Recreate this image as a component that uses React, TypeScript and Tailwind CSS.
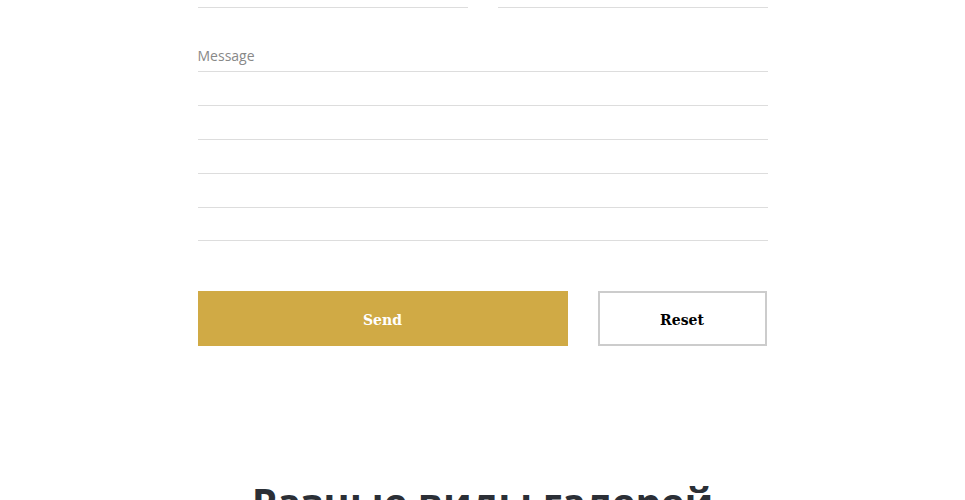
export default function App() {
  return (
    <div className="h-[500px] w-full overflow-hidden bg-white" style={{ fontFamily: '"Open Sans", sans-serif' }}>
      <div className="mx-auto w-[570px]">
        <div className="flex gap-[30px]">
          <div className="h-[8px] flex-1 border-b border-[#dddddd]" />
          <div className="h-[8px] flex-1 border-b border-[#dddddd]" />
        </div>
        <div className="border-b border-[#dddddd] pt-[38px] pb-[5px] text-[14px] leading-[20px] text-[#888888]">Message</div>
        <div className="h-[34px] border-b border-[#dddddd]" />
        <div className="h-[34px] border-b border-[#dddddd]" />
        <div className="h-[34px] border-b border-[#dddddd]" />
        <div className="h-[34px] border-b border-[#dddddd]" />
        <div className="h-[33px] border-b border-[#dddddd]" />
        <div className="mt-[50px] flex gap-[30px]" style={{ fontFamily: '"DejaVu Serif", serif' }}>
          <button className="flex h-[55px] w-[370px] items-center justify-center bg-[#d0aa45] pt-[3px] text-[14px] font-bold text-white">Send</button>
          <button className="flex h-[55px] w-[169px] items-center justify-center border-2 border-[#cccccc] bg-white pt-[3px] text-[14px] font-bold text-black">Reset</button>
        </div>
      </div>
      <h2 className="mt-[131px] text-center text-[40px] font-bold leading-[50px] text-[#2b2f36]">Разные виды галерей</h2>
    </div>
  );
}
